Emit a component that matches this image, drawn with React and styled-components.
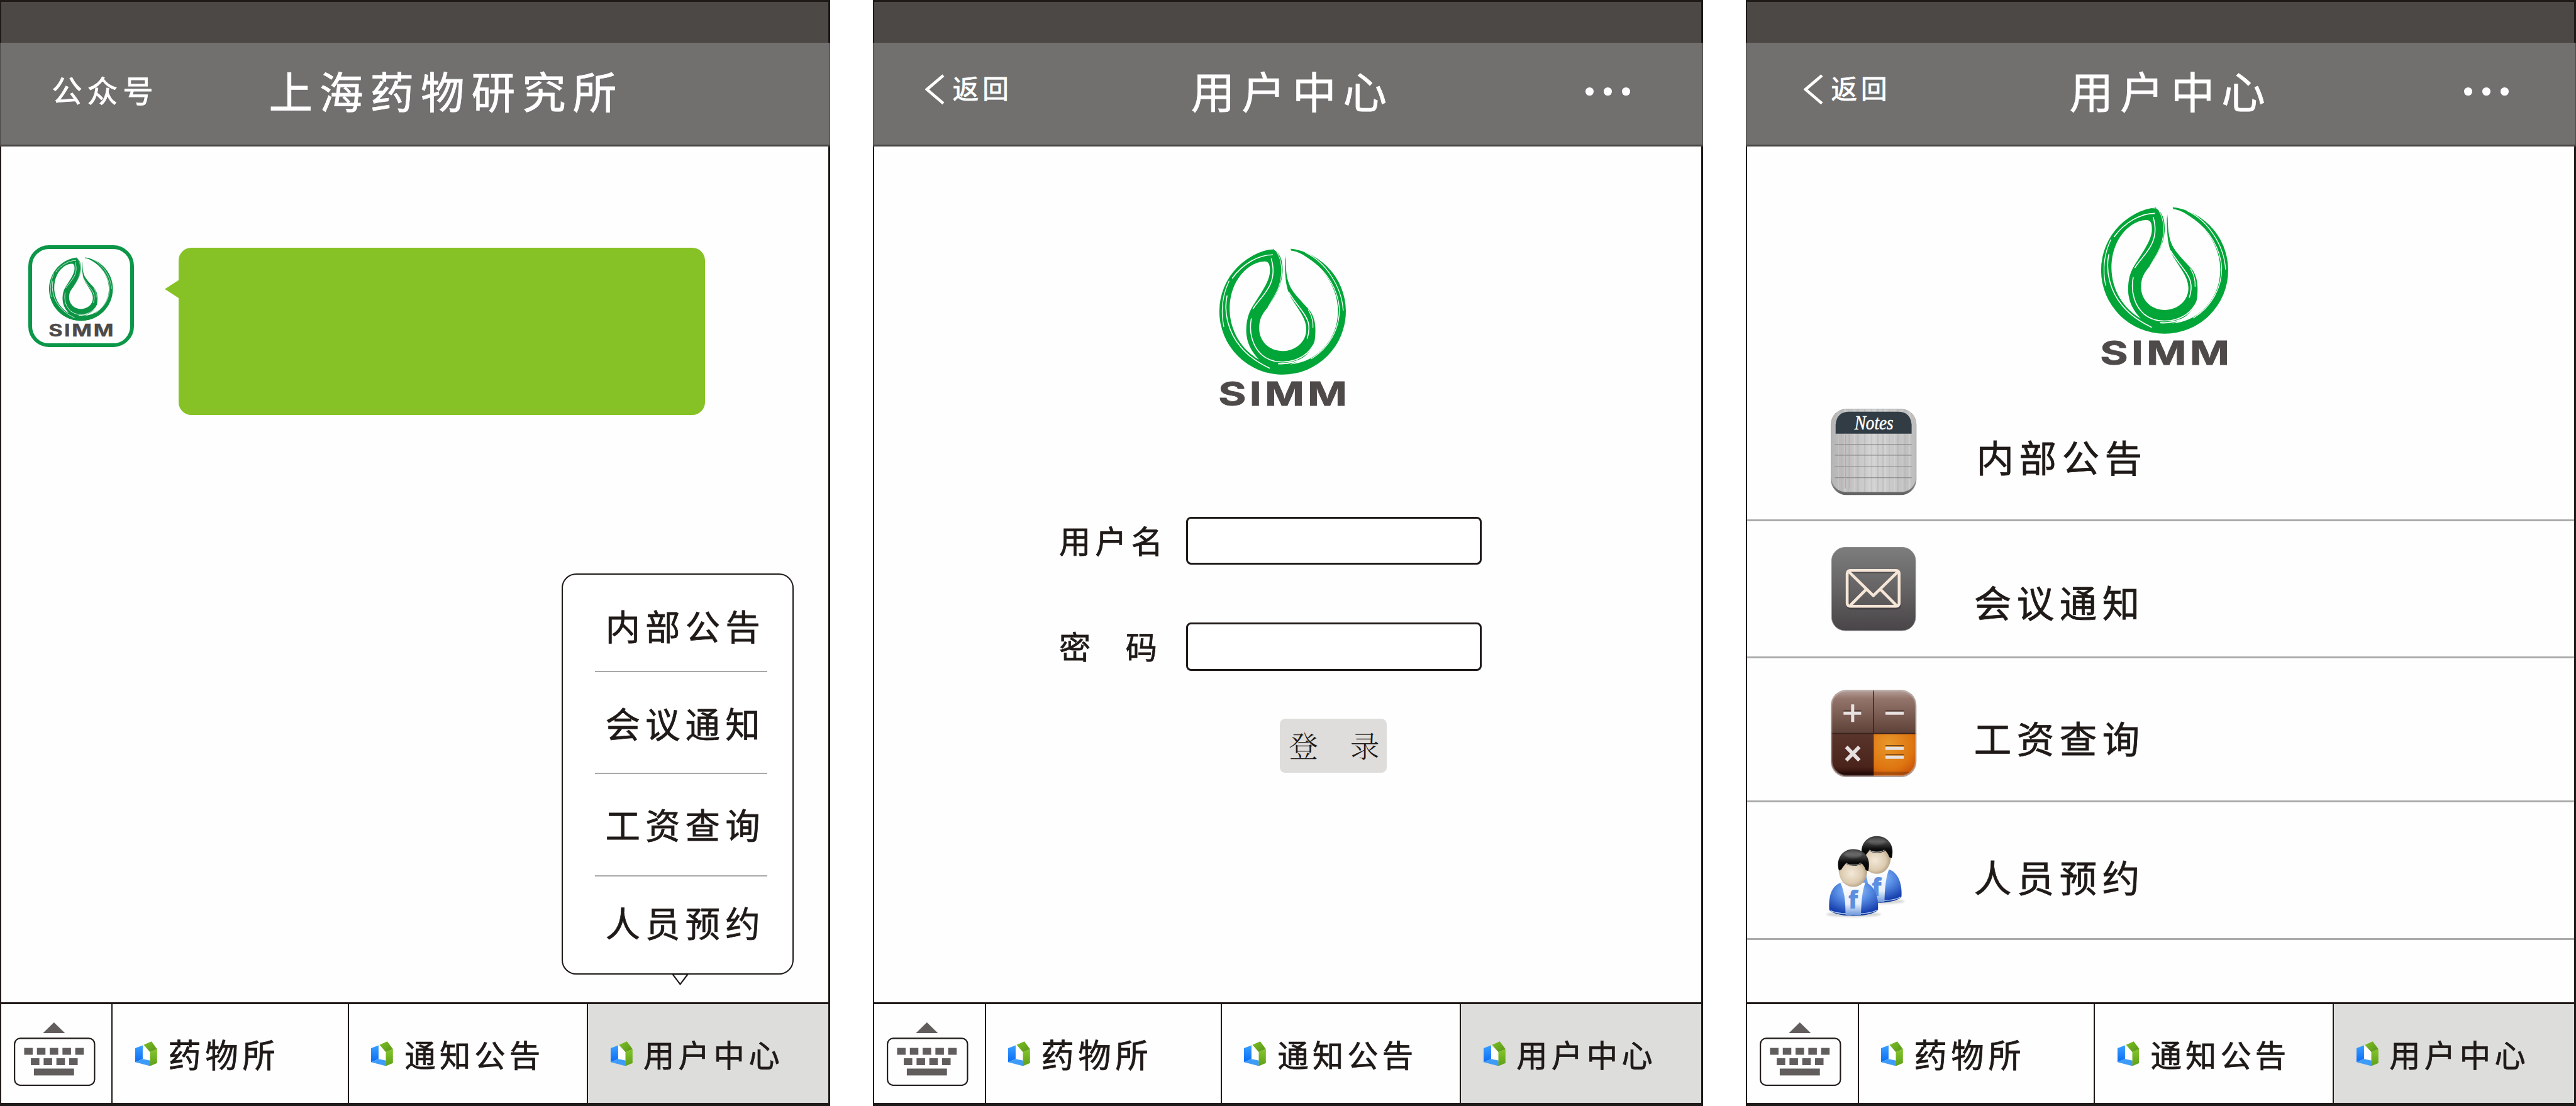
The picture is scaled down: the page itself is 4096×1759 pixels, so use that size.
import React from "react";
import styled, { createGlobalStyle } from "styled-components";

const SCALE = 4096 / 4236;
const u = (n) => `${(n * SCALE).toFixed(2)}px`;

const ink = "#1f1a18";
const sans = `"Noto Sans CJK SC", "Noto Sans", sans-serif`;

const GlobalStyle = createGlobalStyle`
  * { box-sizing: border-box; }
  html, body { margin: 0; padding: 0; background: #fff; }
  body { font-family: ${sans}; color: ${ink}; overflow: hidden; }
  svg { display: block; flex: none; }
`;

const Board = styled.main`
  display: flex;
  justify-content: space-between;
  width: 4096px;
  height: 1759px;
  background: #fff;
`;

const Phone = styled.section`
  position: relative;
  display: flex;
  flex-direction: column;
  width: ${u(1365)};
  height: 100%;
  background: #fefefe;
  &::after {
    content: "";
    position: absolute;
    inset: 0;
    border: solid ${ink};
    border-width: 3px 3px 0 2px;
    pointer-events: none;
  }
`;

const StatusBar = styled.div`
  height: ${u(70)};
  background: #4c4846;
`;

const HeaderBar = styled.header`
  position: relative;
  z-index: 1;
  display: flex;
  align-items: center;
  height: ${u(171)};
  padding-bottom: ${u(13)};
  color: #fff;
  background: #71706e;
  border: solid #4a4644;
  border-width: 0 1px 3px 1px;
`;

const HeaderLeft = styled.div`
  display: flex;
  align-items: center;
  width: ${(p) => u(p.$width)};
  padding-left: ${(p) => u(p.$inset)};
`;

const Label = styled.span`
  font-size: ${(p) => u(p.$size)};
  letter-spacing: ${(p) => u(p.$pitch - p.$size)};
  line-height: 1;
  white-space: pre;
  -webkit-text-stroke: 0.8px currentColor;
`;

const HeaderTitle = styled(Label)`
  margin: 0;
  font-weight: 400;
`;

const BackLabel = styled(Label)`
  margin: ${u(-5)} 0 0 ${u(13)};
`;

const Dots = styled.div`
  display: flex;
  gap: ${u(17)};
  margin: ${u(6)} ${(p) => u(p.$right)} 0 auto;
`;

const Dot = styled.i`
  width: ${u(13)};
  height: ${u(13)};
  border-radius: 50%;
  background: #fff;
`;

const Body = styled.div`
  position: relative;
  flex: 1;
  min-height: 0;
`;

const ChatRow = styled.div`
  display: flex;
  align-items: flex-start;
  padding: ${u(162)} 0 0 ${u(47)};
`;

const Avatar = styled.div`
  display: flex;
  justify-content: center;
  width: ${u(173)};
  height: ${u(168)};
  padding-top: ${u(14)};
  border: ${u(6.3)} solid #0b9648;
  border-radius: ${u(34)};
`;

const Bubble = styled.div`
  position: relative;
  width: ${u(865)};
  height: ${u(276)};
  margin: ${u(4)} 0 0 ${u(74)};
  border-radius: ${u(21)};
  background: #86c226;
  &::before {
    content: "";
    position: absolute;
    left: ${u(-23)};
    top: ${u(53)};
    width: ${u(24)};
    height: ${u(31)};
    background: inherit;
    clip-path: polygon(0 50%, 100% 0, 100% 100%);
  }
`;

const Popup = styled.div`
  position: absolute;
  left: ${u(924)};
  bottom: ${u(45)};
  width: ${u(381)};
  height: ${u(660)};
  padding: 0 ${u(41)} 0 ${u(52)};
  border: 2px solid ${ink};
  border-radius: ${u(24)};
  background: #fff;
`;

const PopupPointer = styled.svg`
  position: absolute;
  left: ${u(178)};
  top: 100%;
`;

const PopupItem = styled.div`
  height: ${(p) => u(p.$height)};
  padding: ${(p) => u(p.$top)} 0 0 ${u(17.5)};
  line-height: 0;
  border-bottom: ${(p) => (p.$last ? "none" : "2px solid #a9a9a9")};
`;

const TabBar = styled.nav`
  display: grid;
  grid-template-columns: ${u(183.5)} ${u(388)} ${u(393.5)} 1fr;
  height: ${u(171)};
  border: solid ${ink};
  border-width: 3px 0 5px;
`;

const Tab = styled.div`
  display: flex;
  align-items: center;
  gap: ${(p) => u(p.$gap)};
  padding-left: ${u(37)};
  background: ${(p) => (p.$active ? "#dddddb" : "transparent")};
  border-left: 2px solid ${ink};
`;

const KeyboardCell = styled.div`
  padding: ${u(30)} 0 0 ${u(23)};
`;

const LoginBody = styled(Body)`
  display: flex;
  flex-direction: column;
  align-items: flex-start;
  padding-top: ${u(167)};
`;

const LogoHolder = styled.div`
  margin-left: ${(p) => u(p.$left)};
`;

const LogoSvg = styled.svg`
  width: ${(p) => u((p.$width * 650) / 626)};
  height: ${(p) => u((p.$width * 830) / 626)};
  margin: 0 ${(p) => u((p.$width * -12) / 626)} ${(p) => u((p.$width * -52) / 626)};
`;

const Field = styled.label`
  display: flex;
  align-items: center;
  margin-top: ${(p) => u(p.$top)};
  padding-left: ${u(306)};
`;

const FieldName = styled(Label)`
  width: ${u(209)};
  margin-top: ${u(-5)};
  word-spacing: ${u(6)};
`;

const Input = styled.input`
  width: ${u(486)};
  height: ${u(79)};
  border: 3px solid ${ink};
  border-radius: ${u(8)};
  background: #fff;
  outline: none;
`;

const LoginButton = styled.button`
  display: flex;
  align-items: center;
  justify-content: space-between;
  width: ${u(176)};
  height: ${u(89)};
  margin: ${u(79)} 0 0 ${u(669)};
  padding: 0 ${u(12)} ${u(3)} ${u(15)};
  border: none;
  border-radius: ${u(9)};
  color: ${ink};
  background: #dedddb;
  font-family: "Noto Serif CJK SC", "Noto Sans CJK SC", serif;
  font-weight: 300;
  font-size: ${u(48)};
  line-height: 1;
`;

const ListBody = styled(Body)`
  padding-top: ${u(99)};
`;

const ListRow = styled.div`
  display: grid;
  grid-template-columns: ${u(235)} 1fr;
  align-items: start;
  height: ${(p) => u(p.$height)};
  padding-left: ${u(140)};
  border-bottom: 3px solid #aaa;
`;

const RowIcon = styled.div`
  margin: ${(p) => u(p.$top)} 0 0 ${(p) => u(p.$left || 0)};
`;

const RowText = styled(Label)`
  margin: ${(p) => u(p.$top)} 0 0 ${(p) => u(p.$left || 0)};
`;

function SimmLogo({ width, green = "#02a638" }) {
  return (
    <LogoSvg $width={width} viewBox="123 83 650 830">
      <circle cx="448" cy="395" r="313" fill={green} />
      <g fill="#fefefe">
        <path d="M355 148 C378 146 387 162 385 200 C383 245 345 300 301 368 C278 405 268 440 268 495 C270 550 292 592 330 633 C245 585 187 490 186 385 C186 290 225 215 285 173 C310 156 335 149 355 148Z" />
        <path d="M404 60 L406 91 C440 112 450 150 448 200 C445 270 405 330 375 375 C345 410 332 435 332 478 C332 545 385 591 448 591 C512 591 565 545 565 485 C565 430 528 390 498 340 C472 298 459 260 459 140 L470 60Z" />
        <path d="M455 60 L463 140 C464 210 472 250 492 284 C519 326 552 355 582 390 C605 420 612 460 610 500 C609 540 604 560 588 583 C562 618 530 642 485 658 C560 650 615 618 655 572 C700 522 722 460 722 390 C722 285 655 180 560 122 C540 108 515 97 490 94 L482 60Z" />
      </g>
      <g fill="none" stroke="#fefefe" strokeLinecap="round">
        <path strokeWidth="3" d="M402 89 C310 78 200 150 158 262" />
        <path strokeWidth="5" d="M398 115 C330 115 250 160 200 230" />
        <path strokeWidth="5" d="M392 135 C408 190 402 235 380 275 C354 322 325 345 302 382" />
        <path strokeWidth="4" d="M183 245 C147 320 143 400 157 470" />
        <path strokeWidth="5" d="M173 318 C155 400 180 500 240 570 C280 620 330 650 383 676" />
        <path strokeWidth="5" d="M293 432 C280 500 300 570 345 610 C380 640 430 650 480 643 C540 632 582 600 608 548" />
        <path strokeWidth="6" d="M428 654 C470 656 520 645 560 622" />
        <path strokeWidth="3" d="M420 103 C450 150 452 230 418 300 C403 330 388 350 376 374" />
        <path strokeWidth="4" d="M560 103 C660 150 740 270 748 390" />
        <path strokeWidth="4" d="M590 145 C670 200 722 290 729 380 C731 480 680 575 590 630" />
        <path strokeWidth="5" d="M478 300 C520 370 560 400 575 450 C582 480 578 505 570 528" />
        <path strokeWidth="4" d="M576 388 C595 420 600 445 598 475" />
      </g>
      <text
        x="0"
        y="0"
        transform="translate(130 860) scale(1.29 1)"
        fontFamily="Inter, 'DejaVu Sans', sans-serif"
        fontWeight="700"
        fontSize="163"
        textLength="494"
        fill="#4e4a49"
        stroke="#4e4a49"
        strokeWidth="2.500"
      >
        SIMM
      </text>
    </LogoSvg>
  );
}

function Chevron() {
  return (
    <svg width={32 * SCALE} height={50 * SCALE} viewBox="0 0 32 50">
      <path d="M30 2 L3 25 L30 48" fill="none" stroke="#fff" strokeWidth="4.8" />
    </svg>
  );
}

function Keyboard() {
  const keys = [
    [17, 42], [38, 42], [59, 42], [80, 42], [101, 42],
    [28, 59], [49, 59], [70, 59], [91, 59],
  ];
  return (
    <svg width={134 * SCALE} height={105 * SCALE} viewBox="0 0 134 105">
      <g fill="#625d5d">
        <path d="M66 0 L84 17.5 H48Z" />
        {keys.map(([x, y]) => (
          <rect key={`${x}-${y}`} x={x} y={y} width="14" height="11.3" />
        ))}
        <rect x="33" y="76" width="66" height="11.3" />
      </g>
      <rect x="1.2" y="26.2" width="131.6" height="77.2" rx="9.5" fill="none" stroke={ink} strokeWidth="2.2" />
    </svg>
  );
}

function HexIcon() {
  return (
    <svg width={36 * SCALE} height={41 * SCALE} viewBox="668 218 108 122">
      <defs>
        <linearGradient id="hexBlue" x1="0" y1="0" x2="0" y2="1">
          <stop offset="0" stopColor="#3aa0ff" />
          <stop offset="1" stopColor="#0a6cf5" />
        </linearGradient>
        <linearGradient id="hexGreen" x1="0" y1="0" x2="0" y2="1">
          <stop offset="0" stopColor="#84c62a" />
          <stop offset="1" stopColor="#5f9f18" />
        </linearGradient>
        <linearGradient id="hexTop" x1="0" y1="0" x2="1" y2="1">
          <stop offset="0" stopColor="#7cc124" />
          <stop offset="1" stopColor="#5a9418" />
        </linearGradient>
      </defs>
      <path fill="#fff" d="M705 238 L742 270 L742 313 L705 305Z" />
      <path fill="url(#hexBlue)" d="M668 252 L705 238 V305 L668 321Z" />
      <path fill="#3d9cf8" d="M668 321 L705 305 L742 313 V340Z" />
      <path fill="url(#hexGreen)" d="M741 271 L776 256 V325 L741 340Z" />
      <path fill="url(#hexTop)" d="M710 235 L748 218 L776 256 L741 271Z" />
    </svg>
  );
}

function NotesIcon() {
  const streaks = [12, 17, 22, 29, 38, 43, 51, 55, 62, 66, 71, 76, 79, 85, 88, 96, 104, 109, 117, 121, 128];
  return (
    <svg width={141 * SCALE} height={142 * SCALE} viewBox="0 0 141 142">
      <defs>
        <linearGradient id="noteBase" x1="0" y1="0" x2="0" y2="1">
          <stop offset="0" stopColor="#a9a9a9" />
          <stop offset="0.8" stopColor="#a2a2a2" />
          <stop offset="1" stopColor="#5f5f5f" />
        </linearGradient>
        <linearGradient id="notePaper" x1="0" y1="0" x2="1" y2="0">
          <stop offset="0" stopColor="#b5b5b5" />
          <stop offset="0.5" stopColor="#d2d2d2" />
          <stop offset="1" stopColor="#bdbdbd" />
        </linearGradient>
        <clipPath id="noteClip"><rect x="1" y="1" width="139" height="136" rx="24" /></clipPath>
      </defs>
      <rect x="0" y="0" width="141" height="142" rx="26" fill="url(#noteBase)" />
      <g clipPath="url(#noteClip)">
        <rect width="141" height="142" fill="url(#notePaper)" />
        {streaks.map((x, i) => (
          <rect key={x} x={x} y="0" width={1 + (i % 3)} height="142" fill={i % 2 ? "#b2b2b2" : "#dadada"} opacity="0.5" />
        ))}
      </g>
      <path d="M8 41 V26 Q10 5 31 5 H110 Q131 5 133 26 V41Z" fill="#323c45" />
      <path d="M7 58.5 H133 M7 76.5 H133 M7 95.5 H133 M7 113.5 H133" stroke="#828282" strokeWidth="1.1" />
      <path d="M24 41 V131 M31.5 41 V131" stroke="#e08aa5" strokeWidth="1.2" />
      <text x="39" y="34" fontFamily="'Liberation Serif', serif" fontStyle="italic" fontSize="32" textLength="64" lengthAdjust="spacingAndGlyphs" fill="#fff" stroke="#fff" strokeWidth="0.5">
        Notes
      </text>
    </svg>
  );
}

function MailIcon() {
  return (
    <svg width={139 * SCALE} height={138 * SCALE} viewBox="0 0 139 138">
      <defs>
        <linearGradient id="mailBg" x1="0" y1="0" x2="0" y2="1">
          <stop offset="0" stopColor="#7d7d7d" />
          <stop offset="0.5" stopColor="#656364" />
          <stop offset="1" stopColor="#494548" />
        </linearGradient>
      </defs>
      <rect x="0.5" y="0.5" width="138" height="137" rx="22" fill="url(#mailBg)" stroke="#8a8889" />
      <g fill="none" strokeWidth="4.8" strokeLinejoin="round">
        <g stroke="#3b3738" opacity="0.6" transform="translate(1 2)">
          <rect x="26" y="38.5" width="85.5" height="60" rx="5" />
        </g>
        <g stroke="#f5e6d8">
          <rect x="26" y="38.5" width="85.5" height="59" rx="5" />
          <path d="M28 40 L69 80 L110 40 M57 70 L31 96 M81 70 L107 96" />
        </g>
      </g>
    </svg>
  );
}

function CalculatorIcon() {
  return (
    <svg width={141 * SCALE} height={144 * SCALE} viewBox="0 0 141 144">
      <defs>
        <linearGradient id="calcTop" x1="0" y1="0" x2="0" y2="1">
          <stop offset="0" stopColor="#b7a39e" />
          <stop offset="0.2" stopColor="#94756b" />
          <stop offset="1" stopColor="#5d4037" />
        </linearGradient>
        <linearGradient id="calcLow" x1="0" y1="0" x2="0" y2="1">
          <stop offset="0" stopColor="#5a352b" />
          <stop offset="0.75" stopColor="#4a241b" />
          <stop offset="1" stopColor="#240604" />
        </linearGradient>
        <radialGradient id="calcEq" cx="0.35" cy="0.25" r="0.95">
          <stop offset="0" stopColor="#e8982a" />
          <stop offset="0.6" stopColor="#de7410" />
          <stop offset="1" stopColor="#bd3f05" />
        </radialGradient>
        <clipPath id="calcClip"><rect x="1" y="1" width="139" height="141" rx="25" /></clipPath>
      </defs>
      <rect x="0" y="0" width="141" height="144" rx="26" fill="#aaa09d" />
      <g clipPath="url(#calcClip)">
        <rect width="141" height="72" fill="url(#calcTop)" />
        <rect y="72" width="71" height="72" fill="url(#calcLow)" />
        <rect x="71" y="72" width="70" height="72" fill="url(#calcEq)" />
        <path d="M70.5 0 V72 M0 72 H141" stroke="#3a221c" strokeWidth="1.6" />
        <path d="M0 138 H141" stroke="#000" strokeOpacity="0.2" strokeWidth="6" />
      </g>
      <rect x="1.5" y="1.5" width="138" height="140" rx="25" fill="none" stroke="#d9d0cd" strokeOpacity="0.4" strokeWidth="2" />
      <g stroke="#2c1712" strokeOpacity="0.6" strokeWidth="2" transform="translate(0 -3.6)">
        <path d="M21 38.5 H50 M90 38.5 H120 M90 95.5 H120 M90 110.5 H120" />
      </g>
      <g stroke="#e6e1e0" strokeWidth="5.2" fill="none">
        <path d="M21 38.5 H50 M36 24 V53 M90 38.5 H120" />
        <path d="M90 96.500 H120 M90 111 H120" />
        <path d="M25.5 94 L47 116 M47 94 L25.5 116" strokeWidth="6" />
      </g>
    </svg>
  );
}

function Person({ x, y, front }) {
  return (
    <g transform={`translate(${x} ${y})`}>
      <ellipse cx="2" cy="322" rx="136" ry="13" fill="#000" opacity="0.16" filter="url(#soft)" />
      <path d="M-118 300 C-124 230 -105 178 -60 165 H62 C104 180 126 230 122 298 C90 334 -84 334 -118 300Z" fill="url(#coat)" />
      <path d="M-120 298 C-84 330 88 330 124 298 C90 340 -88 340 -120 298Z" fill="#123a9a" />
      <path d="M-112 303 C-76 325 80 325 116 301" fill="none" stroke="#b9d2f4" strokeWidth="4" />
      <path d="M-64 165 C-42 210 -38 260 -38 324 C-14 328 16 328 38 324 C40 260 44 205 60 165Z" fill="url(#shirt)" />
      <text x="-25" y="294" fontFamily="'Open Sans', sans-serif" fontWeight="800" fontSize="118" fill="#5a90df">f</text>
      <path d="M-72 90 C-74 150 -42 186 0 186 C42 186 72 150 70 90 C60 40 -60 40 -72 90Z" fill="url(#skin)" />
      <path d="M-70 106 C-88 48 -54 0 0 0 C58 0 90 48 74 108 L62 104 C58 90 52 82 42 70 C28 86 -24 86 -36 70 C-46 82 -54 92 -58 100Z" fill="url(#hair)" />
      <path d="M-36 68 C-20 82 22 82 38 68" fill="none" stroke="#d9d9d9" strokeWidth="4" opacity="0.8" />
      <ellipse cx="0" cy="24" rx="44" ry="20" fill="#fff" opacity={front ? 0.17 : 0.13} filter="url(#soft)" />
    </g>
  );
}

function PeopleIcon() {
  return (
    <svg width={160 * SCALE} height={160 * SCALE} viewBox="0 0 480 480">
      <defs>
        <filter id="soft" x="-20%" y="-100%" width="140%" height="300%"><feGaussianBlur stdDeviation="5" /></filter>
        <radialGradient id="coat" cx="0.5" cy="0.25" r="0.72">
          <stop offset="0" stopColor="#a6cbfa" />
          <stop offset="0.45" stopColor="#5a90e6" />
          <stop offset="1" stopColor="#163fae" />
        </radialGradient>
        <linearGradient id="shirt" x1="0" y1="0" x2="0" y2="1">
          <stop offset="0" stopColor="#fff" />
          <stop offset="0.65" stopColor="#e6effb" />
          <stop offset="1" stopColor="#6d97dc" />
        </linearGradient>
        <radialGradient id="skin" cx="0.45" cy="0.5" r="0.62">
          <stop offset="0" stopColor="#f3e9d8" />
          <stop offset="0.6" stopColor="#dccbb0" />
          <stop offset="1" stopColor="#a08a6c" />
        </radialGradient>
        <linearGradient id="hair" x1="0" y1="0" x2="0" y2="1">
          <stop offset="0" stopColor="#2a2a2a" />
          <stop offset="0.25" stopColor="#4a4a4a" />
          <stop offset="0.6" stopColor="#0c0c0c" />
          <stop offset="1" stopColor="#000" />
        </linearGradient>
      </defs>
      <Person x={289} y={46} />
      <Person x={173} y={110} front />
    </svg>
  );
}

function Header({ title, shift = 0 }) {
  return (
    <HeaderBar>
      <HeaderLeft $width={522 + shift} $inset={85 + shift}>
        <Chevron />
        <BackLabel $size={43} $pitch={49}>返回</BackLabel>
      </HeaderLeft>
      <HeaderTitle as="h1" $size={72} $pitch={83.3}>{title}</HeaderTitle>
      <Dots $right={119 - shift}>
        <Dot />
        <Dot />
        <Dot />
      </Dots>
    </HeaderBar>
  );
}

function BottomTabs() {
  return (
    <TabBar>
      <KeyboardCell>
        <Keyboard />
      </KeyboardCell>
      <Tab $gap={18}>
        <HexIcon />
        <Label $size={54} $pitch={61}>药物所</Label>
      </Tab>
      <Tab $gap={19}>
        <HexIcon />
        <Label $size={51} $pitch={57.3}>通知公告</Label>
      </Tab>
      <Tab $gap={18} $active>
        <HexIcon />
        <Label $size={51} $pitch={57.7}>用户中心</Label>
      </Tab>
    </TabBar>
  );
}

const popupItems = [
  { text: "内部公告", height: 160, top: 55 },
  { text: "会议通知", height: 168, top: 55 },
  { text: "工资查询", height: 168, top: 54 },
  { text: "人员预约", height: 150, top: 47 },
];

const menuItems = [
  { text: "内部公告", Icon: NotesIcon, height: 257.500, iconTop: 73, textTop: 120, textLeft: 4 },
  { text: "会议通知", Icon: MailIcon, height: 225.500, iconTop: 43, textTop: 101, iconLeft: 1 },
  { text: "工资查询", Icon: CalculatorIcon, height: 237, iconTop: 52, textTop: 99 },
  { text: "人员预约", Icon: PeopleIcon, height: 226, iconTop: 40, textTop: 91, iconLeft: -21 },
];

export default function App() {
  return (
    <>
      <GlobalStyle />
      <Board>
        <Phone>
          <StatusBar />
          <HeaderBar>
            <HeaderLeft $width={441} $inset={84}>
              <Label $size={50} $pitch={58.5}>公众号</Label>
            </HeaderLeft>
            <HeaderTitle as="h1" $size={72} $pitch={83.3}>上海药物研究所</HeaderTitle>
          </HeaderBar>
          <Body>
            <ChatRow>
              <Avatar>
                <SimmLogo width={105} green="#0b9444" />
              </Avatar>
              <Bubble />
            </ChatRow>
            <Popup>
              {popupItems.map((item, i) => (
                <PopupItem key={item.text} $height={item.height} $top={item.top} $last={i === popupItems.length - 1}>
                  <Label $size={57} $pitch={65.8}>{item.text}</Label>
                </PopupItem>
              ))}
              <PopupPointer width={28 * SCALE} height={20 * SCALE} viewBox="0 0 28 20">
                <path d="M1.5 1.5 H26.5 L14 18Z" fill="#fff" stroke={ink} strokeWidth="2.2" />
              </PopupPointer>
            </Popup>
          </Body>
          <BottomTabs />
        </Phone>

        <Phone>
          <StatusBar />
          <Header title="用户中心" />
          <LoginBody>
            <LogoHolder $left={570}>
              <SimmLogo width={208} />
            </LogoHolder>
            <Field $top={183.5}>
              <FieldName $size={52} $pitch={59.4}>用户名</FieldName>
              <Input />
            </Field>
            <Field $top={95}>
              <FieldName $size={52} $pitch={59.4}>{"密  码"}</FieldName>
              <Input />
            </Field>
            <LoginButton>
              <span>登</span>
              <span>录</span>
            </LoginButton>
          </LoginBody>
          <BottomTabs />
        </Phone>

        <Phone>
          <StatusBar />
          <Header title="用户中心" shift={9} />
          <ListBody>
            <LogoHolder $left={584}>
              <SimmLogo width={209} />
            </LogoHolder>
            {menuItems.map(({ text, Icon, height, iconTop, iconLeft, textTop, textLeft }) => (
              <ListRow key={text} $height={height}>
                <RowIcon $top={iconTop} $left={iconLeft}>
                  <Icon />
                </RowIcon>
                <RowText $size={61.5} $pitch={70.3} $top={textTop} $left={textLeft}>{text}</RowText>
              </ListRow>
            ))}
          </ListBody>
          <BottomTabs />
        </Phone>
      </Board>
    </>
  );
}
